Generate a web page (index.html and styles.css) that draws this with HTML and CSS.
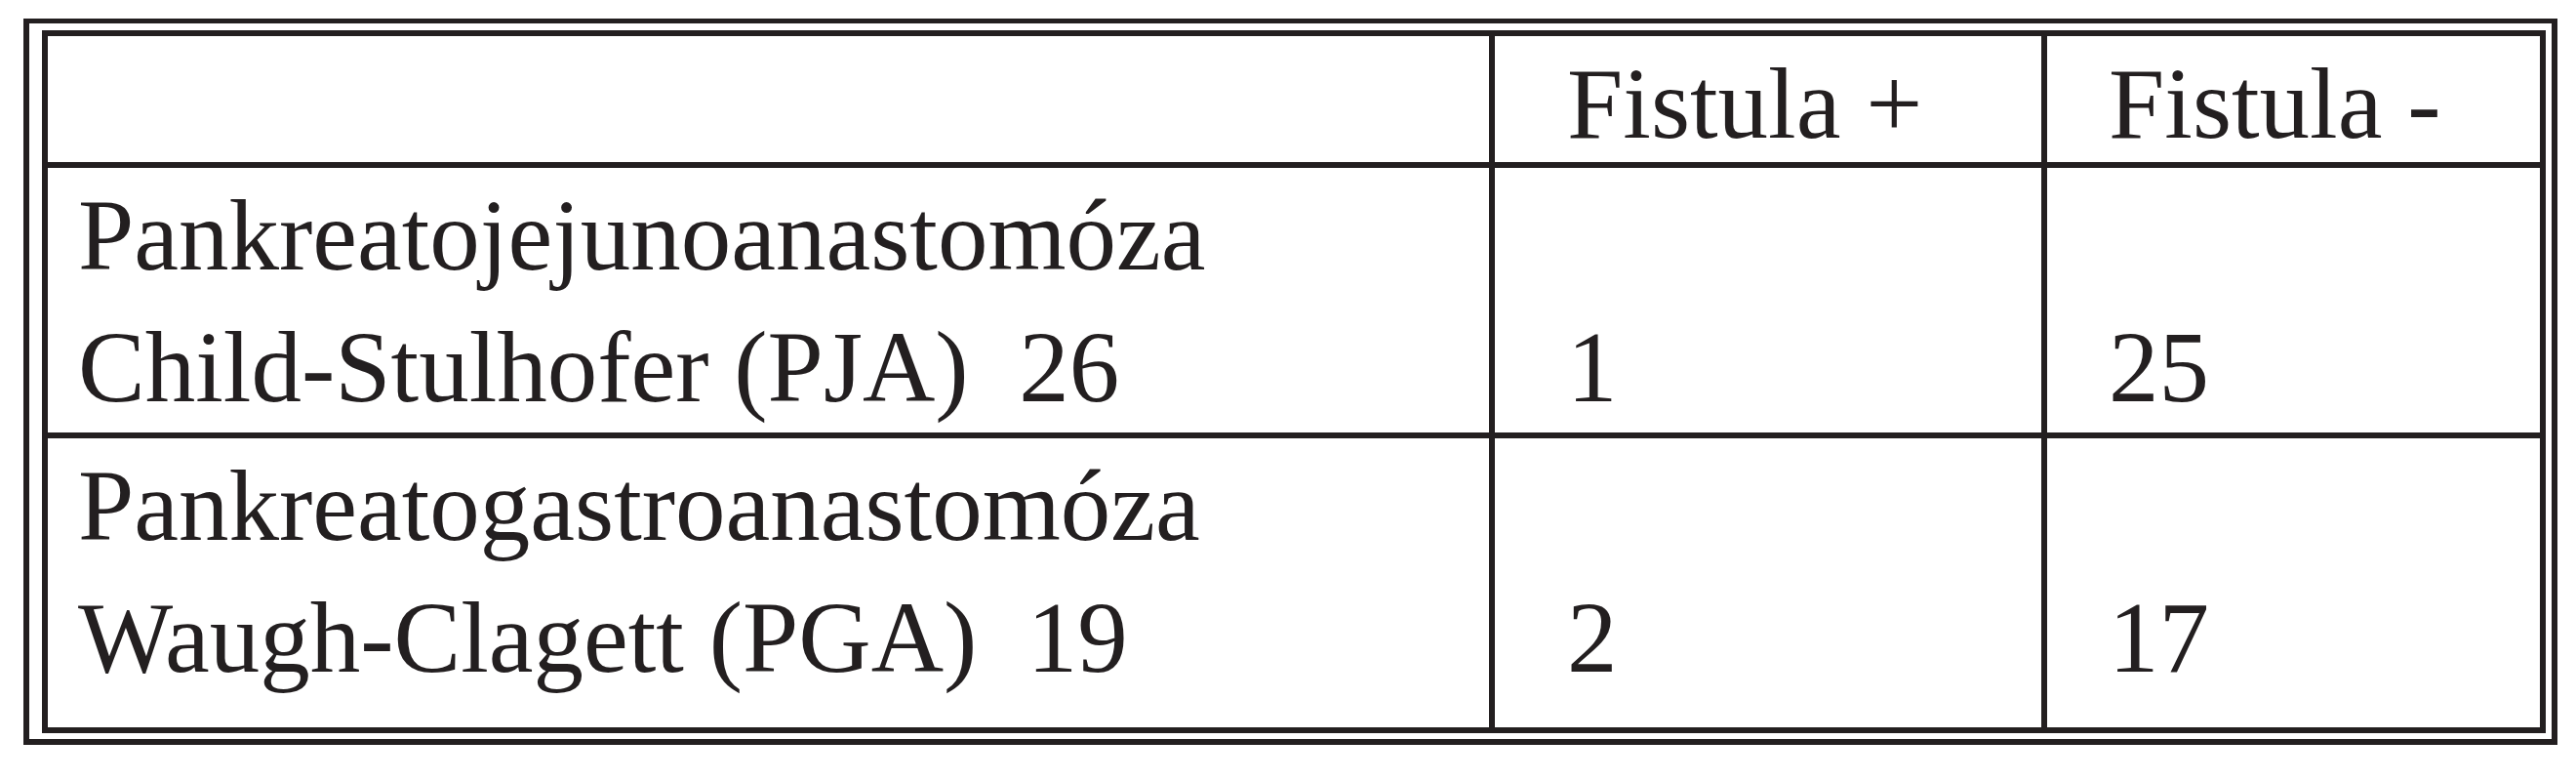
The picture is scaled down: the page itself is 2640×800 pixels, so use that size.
FILE: index.html
```html
<!DOCTYPE html>
<html lang="cs">
<head>
<meta charset="utf-8">
<title>Fistula</title>
<link rel="stylesheet" href="styles.css">
</head>
<body>
<div class="frame">
  <div class="grid" role="table">
    <div class="cell label" role="columnheader"></div>
    <div class="cell c2" role="columnheader">Fistula +</div>
    <div class="cell c3" role="columnheader">Fistula -</div>

    <div class="cell label" role="rowheader">
      <div class="line">Pankreatojejunoanastomóza</div>
      <div class="line">Child-Stulhofer (PJA)  26</div>
    </div>
    <div class="cell c2 second" role="cell">1</div>
    <div class="cell c3 second" role="cell">25</div>

    <div class="cell label" role="rowheader">
      <div class="line">Pankreatogastroanastomóza</div>
      <div class="line">Waugh-Clagett (PGA)  19</div>
    </div>
    <div class="cell c2 second" role="cell">2</div>
    <div class="cell c3 second" role="cell">17</div>
  </div>
</div>
</body>
</html>
```
FILE: styles.css
```css
html, body {
  margin: 0;
  padding: 0;
  background: #ffffff;
}

body {
  width: 2640px;
  height: 800px;
  overflow: hidden;
}

.frame {
  margin: 19px 0 0 24px;
  width: max-content;
  border-style: solid;
  border-color: #231f20;
  border-width: 5px 6px 6px 6px;
  padding: 7px 6px 6px 13px;
  background: #ffffff;
}

.grid {
  display: grid;
  grid-template-columns: 1477px 560px 505px;
  grid-template-rows: 129px 271px 296px;
  gap: 6px;
  padding: 6px;
  background: #231f20;
}

.cell {
  background: #ffffff;
  color: #231f20;
  font-family: "Liberation Serif", "Times New Roman", serif;
  font-size: 103px;
  line-height: 135px;
  padding-top: 2px;
  white-space: nowrap;
  overflow: hidden;
}

.line {
  white-space: pre;
}

.label {
  padding-left: 31px;
}

.c2 {
  padding-left: 74px;
}

.c3 {
  padding-left: 63px;
}

.second {
  padding-top: 137px;
}
```
